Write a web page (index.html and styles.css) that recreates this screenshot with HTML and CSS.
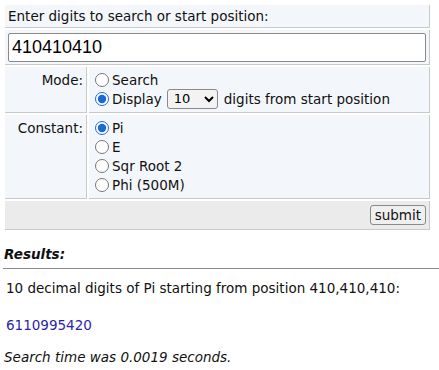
FILE: index.html
```html
<!DOCTYPE html>
<html lang="en">
<head>
  <meta charset="UTF-8">
  <title>Pi Search</title>
  <link rel="stylesheet" href="styles.css">
</head>
<body>

  <form class="search" onsubmit="return false">
    <table class="form-table">
      <tr>
        <td colspan="2" class="cell">Enter digits to search or start position:</td>
      </tr>
      <tr>
        <td colspan="2" class="cell input-cell">
          <input type="text" class="digits" value="410410410">
        </td>
      </tr>
      <tr>
        <td class="cell label">Mode:</td>
        <td class="cell options">
          <label class="opt"><input type="radio" name="mode"> Search</label>
          <label class="opt"><input type="radio" name="mode" checked> Display
            <select class="count">
              <option>10</option>
              <option>50</option>
              <option>100</option>
            </select>
            digits from start position</label>
        </td>
      </tr>
      <tr>
        <td class="cell label">Constant:</td>
        <td class="cell options">
          <label class="opt"><input type="radio" name="const" checked> Pi</label>
          <label class="opt"><input type="radio" name="const"> E</label>
          <label class="opt"><input type="radio" name="const"> Sqr Root 2</label>
          <label class="opt"><input type="radio" name="const"> Phi (500M)</label>
        </td>
      </tr>
      <tr>
        <td colspan="2" class="cell actions">
          <button type="submit" class="submit">submit</button>
        </td>
      </tr>
    </table>
  </form>

  <div class="results">
    <p class="results-title">Results:</p>
    <hr>
    <p class="summary">10 decimal digits of Pi starting from position 410,410,410:</p>
    <p class="digits-out">6110995420</p>
    <p class="time">Search time was 0.0019 seconds.</p>
  </div>

</body>
</html>
```

FILE: styles.css
```css
body {
  font-family: "DejaVu Sans", Verdana, sans-serif;
  font-size: 13.5px;
  line-height: 16px;
  color: #111;
  margin: 0;
  padding: 3px 0 0 3px;
}

.form-table {
  border-collapse: separate;
  border-spacing: 2px;
  width: 429px;
}

.cell {
  background-color: #f3f6fa;
  border-right: 1px solid #c9c9c9;
  border-bottom: 1px solid #c9c9c9;
  padding: 3px 3px 3px;
  vertical-align: top;
}

.input-cell {
  padding: 3px 3px 2px;
}

.digits {
  box-sizing: border-box;
  width: 100%;
  height: 29px;
  font-family: "Liberation Sans", Arial, sans-serif;
  font-size: 18px;
  padding: 1px 3px;
  border: 1px solid #8a8a8a;
  border-radius: 2px;
  color: #000;
}

.label {
  width: 75px;
  text-align: right;
  padding-top: 5px;
}

.options {
  padding: 3px 3px 4px 6px;
}

.opt {
  display: flex;
  align-items: center;
  height: 19px;
}

.opt input[type="radio"] {
  width: 14px;
  height: 14px;
  margin: 0 3px 0 0;
  accent-color: #1a6ad6;
}

.count {
  font-family: "DejaVu Sans", Verdana, sans-serif;
  font-size: 13px;
  width: 51px;
  height: 20px;
  margin: 0 6px 0 5px;
  padding: 0 2px;
  border: 1px solid #8a8a8a;
  border-radius: 3px;
  background-color: #f3f3f3;
}

.actions {
  background-color: #ebebeb;
  text-align: right;
  padding: 4px 3px 4px;
}

.submit {
  font-family: "DejaVu Sans", Verdana, sans-serif;
  font-size: 13.5px;
  padding: 1px 4px;
  border: 1px solid #8a8a8a;
  border-radius: 3px;
  background-color: #efefef;
  color: #111;
}

.results p {
  margin: 0;
}

.results-title {
  font-weight: bold;
  font-style: italic;
  padding: 14px 0 0 1px;
}

hr {
  border: none;
  border-top: 1px solid #8a8a8a;
  margin: 6px -3px 0 0;
}

.summary {
  padding: 11px 0 0 3px;
}

.digits-out {
  color: #2b1fb0;
  padding: 21px 0 0 3px;
}

.time {
  font-style: italic;
  padding: 16px 0 0 1px;
}
```
